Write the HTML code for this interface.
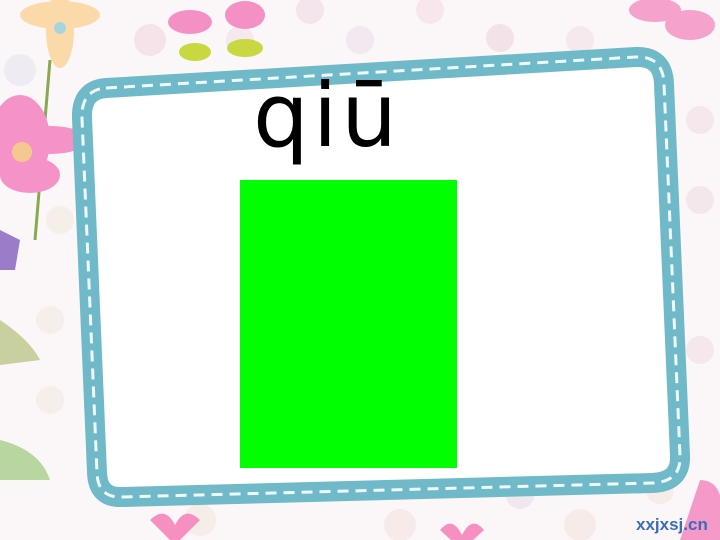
<!DOCTYPE html>
<html><head><meta charset="utf-8"><style>
html,body{margin:0;padding:0}
body{width:720px;height:540px;overflow:hidden;background:#fbf6f7;position:relative;font-family:"Liberation Sans",sans-serif}
svg{position:absolute;left:0;top:0}
</style></head><body>
<svg width="720" height="540" viewBox="0 0 720 540">
<g opacity="0.55">
<circle cx="150" cy="40" r="16" fill="#f2d5e0"/><circle cx="310" cy="10" r="14" fill="#f0d8e4"/>
<circle cx="240" cy="40" r="14" fill="#f2dde6"/><circle cx="430" cy="10" r="14" fill="#f4dbe4"/>
<circle cx="500" cy="38" r="14" fill="#f0d2de"/><circle cx="580" cy="40" r="14" fill="#f3e0e6"/>
<circle cx="360" cy="40" r="14" fill="#ece0ec"/><circle cx="20" cy="70" r="16" fill="#e6e2ef"/>
<circle cx="700" cy="120" r="14" fill="#f0dbe4"/><circle cx="700" cy="200" r="14" fill="#f0dbe4"/>
<circle cx="700" cy="350" r="14" fill="#f0dbe4"/><circle cx="60" cy="220" r="14" fill="#f2e8dc"/>
<circle cx="50" cy="320" r="14" fill="#f2e8dc"/><circle cx="50" cy="400" r="14" fill="#f2e8dc"/>
<circle cx="200" cy="520" r="16" fill="#f2e3dc"/><circle cx="400" cy="525" r="16" fill="#f2e3dc"/>
<circle cx="580" cy="525" r="16" fill="#f2e3dc"/><circle cx="520" cy="495" r="14" fill="#e8dde8"/>
<circle cx="660" cy="490" r="14" fill="#f2e3dc"/>
</g>
<g fill="#fbd9a8"><ellipse cx="60" cy="15" rx="40" ry="14"/><ellipse cx="60" cy="30" rx="14" ry="38"/></g>
<circle cx="60" cy="28" r="6" fill="#a8d4e0"/>
<g fill="#f590c4"><ellipse cx="190" cy="22" rx="22" ry="12"/><ellipse cx="245" cy="15" rx="20" ry="14"/></g>
<g fill="#c8d840"><ellipse cx="195" cy="52" rx="16" ry="9"/><ellipse cx="245" cy="48" rx="18" ry="9"/></g>
<path d="M50 60 L35 240" stroke="#8aa850" stroke-width="3"/>
<g fill="#f592c8"><ellipse cx="20" cy="140" rx="30" ry="45"/><ellipse cx="50" cy="140" rx="38" ry="14"/><ellipse cx="30" cy="175" rx="30" ry="18"/></g>
<circle cx="22" cy="152" r="10" fill="#f5c890"/>
<path d="M0 230 l20 10 l-5 30 l-15 0z" fill="#9a7cc8"/>
<path d="M0 320 q30 20 40 40 l-40 5z" fill="#c8d0a0"/>
<path d="M0 440 q40 10 50 40 l-50 0z" fill="#b8d6a0"/>
<g fill="#f5a2cc"><ellipse cx="655" cy="10" rx="26" ry="12"/><ellipse cx="690" cy="25" rx="25" ry="15"/></g>
<path d="M150 520 q15 -15 25 5 q10 -20 25 -5 l-25 25z" fill="#f590c0"/>
<path d="M440 530 q12 -15 22 5 q10 -20 22 -5 l-22 20z" fill="#f590c0"/>
<path d="M700 480 q30 0 20 60 l-40 0z" fill="#f59ac8"/>
<path d="M110 95 L640 60 Q672 58 673 92 L690 455 Q692 490 658 490 L120 502 Q88 503 86 470 L74 130 Q73 97 110 95Z" fill="#ffffff"/>
<path d="M106 88 L636 57 Q663 56 664 84 L680 456 Q681 482 652 483 L122 497 Q98 498 97 473 L82 118 Q81 90 106 88Z" fill="none" stroke="#6fb9c9" stroke-width="20"/>
<path d="M106 88 L636 57 Q663 56 664 84 L680 456 Q681 482 652 483 L122 497 Q98 498 97 473 L82 118 Q81 90 106 88Z" fill="none" stroke="#eefaff" stroke-width="3" stroke-dasharray="11 7"/>
<text x="636" y="530" font-family="Liberation Sans,sans-serif" font-size="17" font-weight="bold" fill="#3a6db8">xxjxsj.cn</text>
</svg>
<div style="position:absolute;left:253px;top:66px;font-size:88px;line-height:100px;letter-spacing:4px;color:#000;font-family:'DejaVu Sans','Liberation Sans',sans-serif">qiū</div>
<div style="position:absolute;left:240px;top:180px;width:217px;height:288px;background:#00ff00"></div>
</body></html>
